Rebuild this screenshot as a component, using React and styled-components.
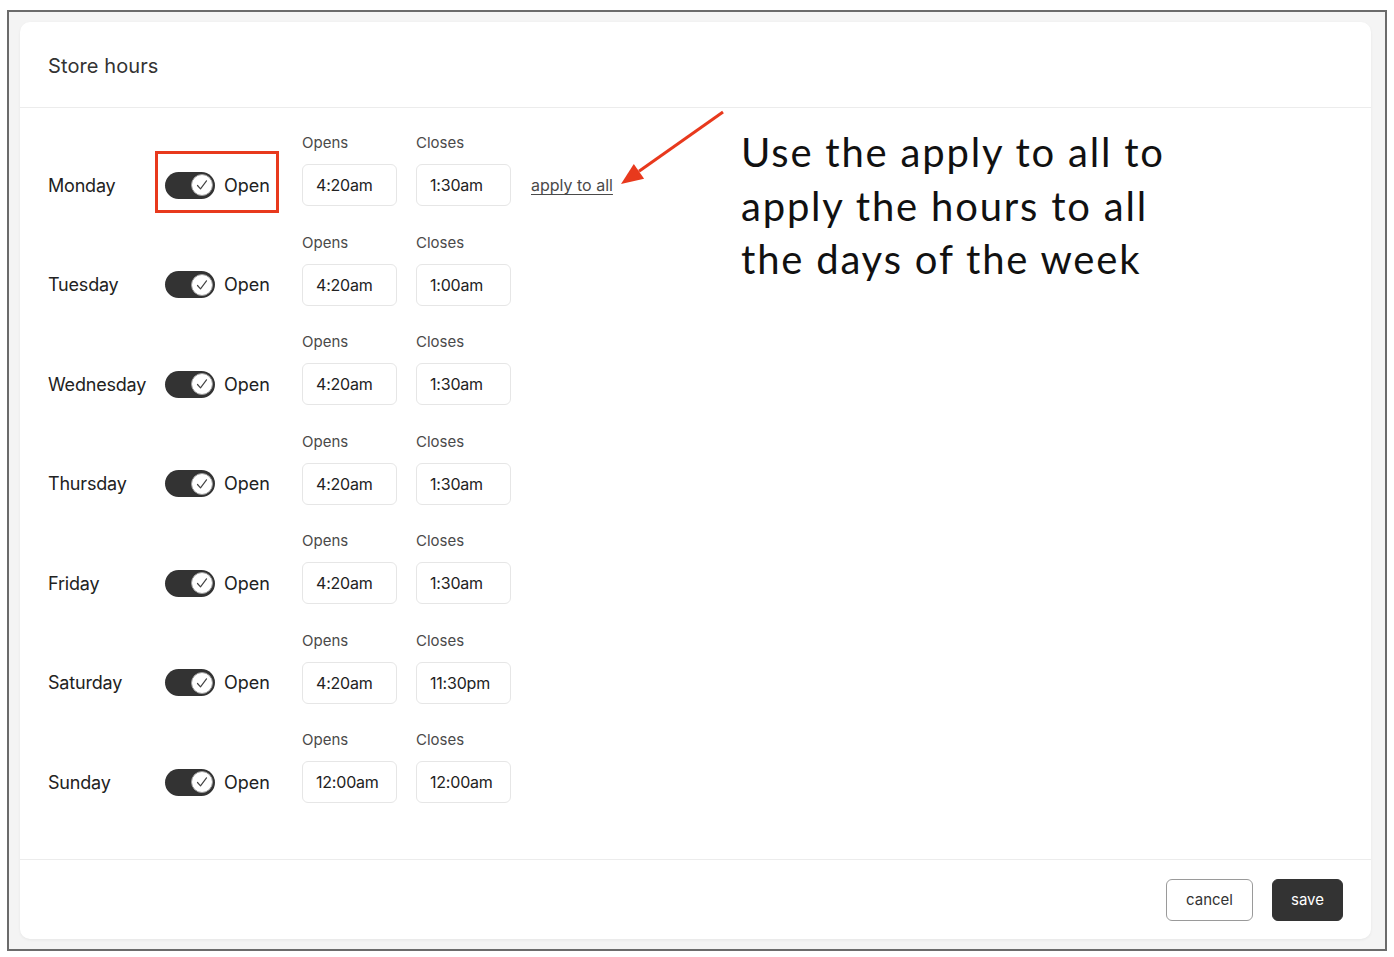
import React from "react";
import styled, { createGlobalStyle } from "styled-components";

const GlobalStyle = createGlobalStyle`
  * {
    box-sizing: border-box;
  }
  body {
    margin: 0;
    background: #ffffff;
    font-family: "Inter", "Liberation Sans", sans-serif;
    color: #222222;
  }
`;

const Frame = styled.div`
  margin: 10px 0 0 7px;
  width: 1380px;
  height: 941px;
  border: 2px solid #6b6b6b;
  background: #f4f4f4;
  padding: 10px 14px 10px 11px;
`;

const Card = styled.div`
  position: relative;
  height: 100%;
  display: flex;
  flex-direction: column;
  background: #ffffff;
  border-radius: 10px;
  box-shadow: 0 1px 3px rgba(0, 0, 0, 0.06);
`;

const Header = styled.div`
  height: 86px;
  display: flex;
  align-items: center;
  padding: 3px 28px 0;
  border-bottom: 1px solid #ececec;
`;

const Title = styled.h2`
  margin: 0;
  font-size: 20px;
  font-weight: 400;
  color: #333333;
  letter-spacing: 0.1px;
`;

const Body = styled.div`
  flex: 1;
  display: flex;
  flex-direction: column;
  gap: 26.5px;
  padding: 25px 28px 0;
`;

const Row = styled.div`
  display: flex;
  align-items: flex-end;
`;

const DayLabel = styled.div`
  width: 117px;
  height: 42px;
  display: flex;
  align-items: center;
  font-size: 18px;
  letter-spacing: -0.2px;
  color: #222222;
`;

const ToggleGroup = styled.div`
  position: relative;
  width: 137px;
  height: 42px;
  display: flex;
  align-items: center;
  gap: 9px;
  font-size: 18px;
  color: #222222;
`;

const Track = styled.div`
  position: relative;
  width: 50px;
  height: 27px;
  border-radius: 14px;
  background: ${(p) => (p.$on ? "#333333" : "#cccccc")};
  flex-shrink: 0;
`;

const Knob = styled.div`
  position: absolute;
  top: 2.5px;
  right: 2px;
  width: 22px;
  height: 22px;
  border-radius: 50%;
  background: #ffffff;
  border: 1px solid #9a9a9a;
  display: flex;
  align-items: center;
  justify-content: center;
`;

const Highlight = styled.div`
  position: absolute;
  left: -10px;
  top: -13px;
  width: 124px;
  height: 62px;
  border: 3px solid #e8391d;
  pointer-events: none;
`;

const Fields = styled.div`
  display: flex;
  gap: 19px;
`;

const Field = styled.div`
  display: flex;
  flex-direction: column;
`;

const FieldLabel = styled.div`
  font-size: 15px;
  line-height: 18px;
  color: #4a4a4a;
  margin-top: 1px;
  margin-bottom: 12px;
`;

const TimeBox = styled.div`
  width: 95px;
  height: 42px;
  border: 1px solid #e6e6e6;
  border-radius: 6px;
  padding-left: 13px;
  display: flex;
  align-items: center;
  font-size: 16px;
  letter-spacing: -0.2px;
  color: #222222;
`;

const ApplyLink = styled.a`
  margin-left: 20px;
  height: 42px;
  display: flex;
  align-items: center;
  font-size: 16px;
  color: #4a4a4a;
  text-decoration: underline;
  text-underline-offset: 3px;
  cursor: pointer;
`;

const Footer = styled.div`
  height: 80px;
  border-top: 1px solid #ececec;
  display: flex;
  align-items: center;
  justify-content: flex-end;
  gap: 19px;
  padding: 0 28px;
`;

const Button = styled.button`
  height: 42px;
  padding: 0 ${(p) => (p.$primary ? "18px" : "19px")};
  border-radius: 6px;
  font-family: "Inter", "Liberation Sans", sans-serif;
  font-size: 15px;
  cursor: pointer;
  border: 1px solid ${(p) => (p.$primary ? "#333333" : "#9a9a9a")};
  background: ${(p) => (p.$primary ? "#333333" : "#ffffff")};
  color: ${(p) => (p.$primary ? "#ffffff" : "#333333")};
`;

const Arrow = styled.svg`
  position: absolute;
  left: 580px;
  top: 78px;
  overflow: visible;
`;

const Note = styled.p`
  position: absolute;
  left: 721px;
  top: 104px;
  margin: 0;
  font-family: "Lato", "Liberation Sans", sans-serif;
  font-size: 40px;
  line-height: 53.5px;
  letter-spacing: 1.8px;
  color: #111111;
  white-space: nowrap;
`;

const days = [
  { day: "Monday", opens: "4:20am", closes: "1:30am", first: true },
  { day: "Tuesday", opens: "4:20am", closes: "1:00am" },
  { day: "Wednesday", opens: "4:20am", closes: "1:30am" },
  { day: "Thursday", opens: "4:20am", closes: "1:30am" },
  { day: "Friday", opens: "4:20am", closes: "1:30am" },
  { day: "Saturday", opens: "4:20am", closes: "11:30pm" },
  { day: "Sunday", opens: "12:00am", closes: "12:00am" },
];

const Toggle = ({ on }) => (
  <Track $on={on}>
    <Knob>
      <svg width="14" height="14" viewBox="0 0 14 14">
        <path
          d="M2.5 7.5 L5.5 10.8 L11.5 2.8"
          fill="none"
          stroke="#444"
          strokeWidth="1.2"
          strokeLinecap="round"
          strokeLinejoin="round"
        />
      </svg>
    </Knob>
  </Track>
);

const DayRow = ({ day, opens, closes, first }) => (
  <Row>
    <DayLabel>{day}</DayLabel>
    <ToggleGroup>
      <Toggle on />
      <span>Open</span>
      {first && <Highlight />}
    </ToggleGroup>
    <Fields>
      <Field>
        <FieldLabel>Opens</FieldLabel>
        <TimeBox>{opens}</TimeBox>
      </Field>
      <Field>
        <FieldLabel>Closes</FieldLabel>
        <TimeBox>{closes}</TimeBox>
      </Field>
    </Fields>
    {first && <ApplyLink>apply to all</ApplyLink>}
  </Row>
);

const App = () => {
  return (
    <>
      <GlobalStyle />
      <Frame>
        <Card>
          <Header>
            <Title>Store hours</Title>
          </Header>
          <Body>
            {days.map((d) => (
              <DayRow key={d.day} {...d} />
            ))}
          </Body>
          <Footer>
            <Button>cancel</Button>
            <Button $primary>save</Button>
          </Footer>

          {/* annotation overlay */}
          <Arrow width="140" height="100" viewBox="0 0 140 100">
            <line x1="123" y1="12" x2="39" y2="71.3" stroke="#e8391d" strokeWidth="3" />
            <polygon points="21,84 44.1,78.7 33.8,64" fill="#e8391d" />
          </Arrow>
          <Note>
            Use the apply to all to
            <br />
            apply the hours to all
            <br />
            the days of the week
          </Note>
        </Card>
      </Frame>
    </>
  );
};

export default App;
